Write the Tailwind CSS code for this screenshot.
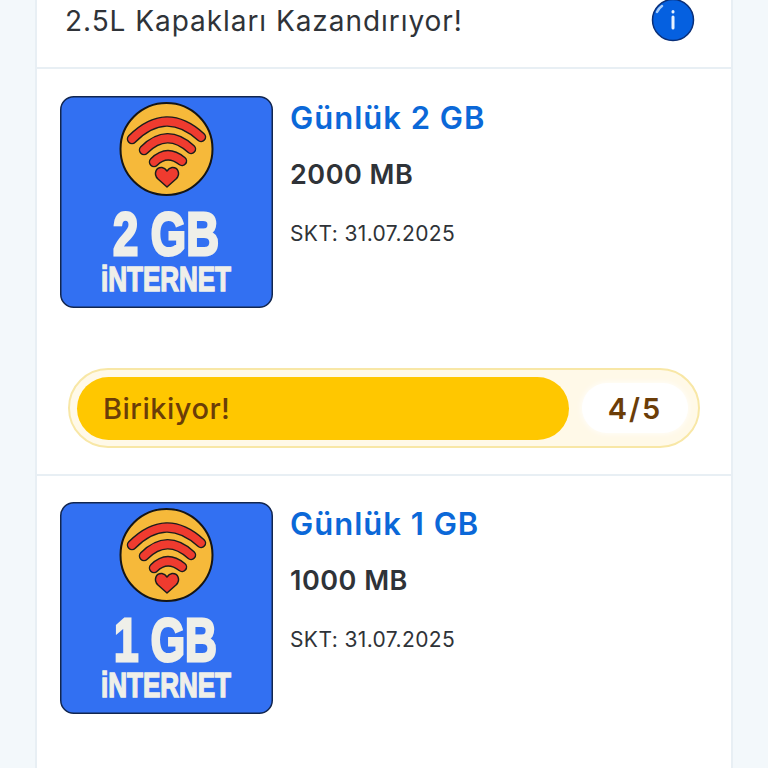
<!DOCTYPE html>
<html lang="tr">
<head>
    <meta charset="UTF-8">
    <meta name="viewport" content="width=device-width, initial-scale=1.0">
    <title>Günlük İnternet</title>
    <script src="https://cdn.jsdelivr.net/npm/@tailwindcss/browser@4"></script>
</head>
<body class="bg-[#f3f8fb] h-[768px] overflow-hidden font-['Inter',sans-serif]">
<div class="ml-[35px] w-[698px] h-[768px] bg-white border-x-2 border-[#e8eff4] overflow-hidden">

    <!-- Header -->
    <div class="h-[69px] border-b-2 border-[#e8eff4] flex justify-between pl-[28px] pr-[36px]">
        <p class="text-[28px] leading-[42px] text-[#2f3338] tracking-[0.95px]">2.5L Kapakları Kazandırıyor!</p>
        <svg class="w-[44px] h-[44px]" viewBox="0 0 44 44">
            <circle cx="22" cy="20" r="20.5" fill="#0560e0" stroke="#0a2f78" stroke-width="1.5"/>
            <path d="M6 12 Q8 8 11 6" stroke="#a8cdfa" stroke-width="2.5" fill="none" stroke-linecap="round"/>
            <rect x="20.5" y="10" width="3" height="3.5" rx="1.5" fill="#e8f2ff"/>
            <rect x="20.5" y="15.5" width="3" height="14" rx="1.5" fill="#e8f2ff"/>
        </svg>
    </div>

    <!-- Günlük 2 GB -->
    <div class="h-[407px] border-b-2 border-[#e8eff4] pt-[27px] pl-[23px]">
        <div class="flex gap-[17px]">
            <svg class="w-[213px] h-[212px] shrink-0" viewBox="0 0 213 212">
                <rect x="0.75" y="0.75" width="211.5" height="210.5" rx="13" fill="#3270f2" stroke="#12264f" stroke-width="1.5"/>
                <circle cx="106.5" cy="53" r="46" fill="#f6b93a" stroke="#151515" stroke-width="2"/>
                <path d="M72 43 Q106 9 141 41" fill="none" stroke="#1c1c1c" stroke-width="10.5" stroke-linecap="round"/>
                <path d="M72 43 Q106 9 141 41" fill="none" stroke="#ef3b2f" stroke-width="7.5" stroke-linecap="round"/>
                <path d="M84 54 Q107 31 131 53" fill="none" stroke="#1c1c1c" stroke-width="10.5" stroke-linecap="round"/>
                <path d="M84 54 Q107 31 131 53" fill="none" stroke="#ef3b2f" stroke-width="7.5" stroke-linecap="round"/>
                <path d="M94 66 Q107 53 122 65" fill="none" stroke="#1c1c1c" stroke-width="10.5" stroke-linecap="round"/>
                <path d="M94 66 Q107 53 122 65" fill="none" stroke="#ef3b2f" stroke-width="7.5" stroke-linecap="round"/>
                <path d="M107 91 L98 83 C93 78 96 71 102 71.5 Q105 72 107 75 Q109 72 112 71.5 C118 71 121 78 116 83 Z" fill="#ef3b2f" stroke="#1c1c1c" stroke-width="1.5" stroke-linejoin="round"/>
                <text x="53" y="159" textLength="106" lengthAdjust="spacingAndGlyphs" fill="#efefe9" stroke="#efefe9" stroke-width="3" font-family="Liberation Sans" font-weight="700" font-size="62">2 GB</text>
                <text x="41" y="195" textLength="130" lengthAdjust="spacingAndGlyphs" fill="#efefe9" stroke="#efefe9" stroke-width="1.5" font-family="Liberation Sans" font-weight="700" font-size="35">iNTERNET</text>
            </svg>
            <div class="pt-px">
                <h2 class="text-[31px] leading-[42px] font-semibold tracking-[1px] text-[#0b68d8] mb-[15px]">Günlük 2 GB</h2>
                <p class="text-[27px] leading-[42px] font-semibold tracking-[0.5px] text-[#2f3338] mb-[17px]">2000 MB</p>
                <p class="text-[21px] leading-[42px] tracking-[0.4px] text-[#2f3338]">SKT: 31.07.2025</p>
            </div>
        </div>
        <div class="mt-[60px] ml-[8px] w-[632px] h-[80px] rounded-full border-2 border-[#f8e7a6] bg-[#fff9e8] p-[7px] flex items-center justify-between">
            <div class="w-[492px] h-[63px] rounded-full bg-[#ffc700] flex items-center pl-[26px] pt-px">
                <span class="text-[29px] font-medium tracking-[0.5px] text-[#6b3d08]">Birikiyor!</span>
            </div>
            <div class="w-[106px] h-[50px] mr-[3px] rounded-full bg-white shadow-[0_0_6px_white] flex items-center justify-center pt-px">
                <span class="text-[29px] font-semibold text-[#6b3d08] tracking-[2px]">4/5</span>
            </div>
        </div>
    </div>

    <!-- Günlük 1 GB -->
    <div class="pt-[26px] pl-[23px]">
        <div class="flex gap-[17px]">
            <svg class="w-[213px] h-[212px] shrink-0" viewBox="0 0 213 212">
                <rect x="0.75" y="0.75" width="211.5" height="210.5" rx="13" fill="#3270f2" stroke="#12264f" stroke-width="1.5"/>
                <circle cx="106.5" cy="53" r="46" fill="#f6b93a" stroke="#151515" stroke-width="2"/>
                <path d="M72 43 Q106 9 141 41" fill="none" stroke="#1c1c1c" stroke-width="10.5" stroke-linecap="round"/>
                <path d="M72 43 Q106 9 141 41" fill="none" stroke="#ef3b2f" stroke-width="7.5" stroke-linecap="round"/>
                <path d="M84 54 Q107 31 131 53" fill="none" stroke="#1c1c1c" stroke-width="10.5" stroke-linecap="round"/>
                <path d="M84 54 Q107 31 131 53" fill="none" stroke="#ef3b2f" stroke-width="7.5" stroke-linecap="round"/>
                <path d="M94 66 Q107 53 122 65" fill="none" stroke="#1c1c1c" stroke-width="10.5" stroke-linecap="round"/>
                <path d="M94 66 Q107 53 122 65" fill="none" stroke="#ef3b2f" stroke-width="7.5" stroke-linecap="round"/>
                <path d="M107 91 L98 83 C93 78 96 71 102 71.5 Q105 72 107 75 Q109 72 112 71.5 C118 71 121 78 116 83 Z" fill="#ef3b2f" stroke="#1c1c1c" stroke-width="1.5" stroke-linejoin="round"/>
                <text x="54" y="159" textLength="103" lengthAdjust="spacingAndGlyphs" fill="#efefe9" stroke="#efefe9" stroke-width="3" font-family="Liberation Sans" font-weight="700" font-size="62">1 GB</text>
                <text x="41" y="195" textLength="130" lengthAdjust="spacingAndGlyphs" fill="#efefe9" stroke="#efefe9" stroke-width="1.5" font-family="Liberation Sans" font-weight="700" font-size="35">iNTERNET</text>
            </svg>
            <div class="pt-px">
                <h2 class="text-[31px] leading-[42px] font-semibold tracking-[1px] text-[#0b68d8] mb-[15px]">Günlük 1 GB</h2>
                <p class="text-[27px] leading-[42px] font-semibold tracking-[0.5px] text-[#2f3338] mb-[17px]">1000 MB</p>
                <p class="text-[21px] leading-[42px] tracking-[0.4px] text-[#2f3338]">SKT: 31.07.2025</p>
            </div>
        </div>
    </div>
</div>
</body>
</html>
